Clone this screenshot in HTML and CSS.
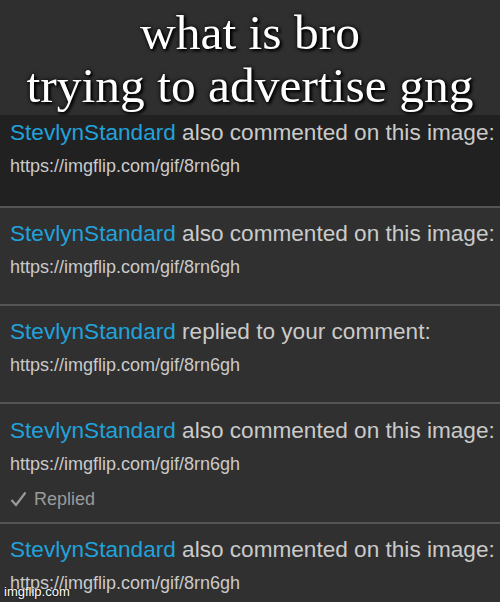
FILE: index.html
```html
<!DOCTYPE html>
<html lang="en">
<head>
    <meta charset="UTF-8">
    <meta name="viewport" content="width=device-width, initial-scale=1.0">
    <title>what is bro trying to advertise gng</title>
    <link rel="stylesheet" href="styles.css">
</head>
<body>

    <div class="meme">
        <header class="caption">
            <p>what is bro<br>trying to advertise gng</p>
        </header>

        <ul class="notifications">
            <li class="notification notification-first">
                <div class="notification-title"><a class="user">StevlynStandard</a> also commented on this image:</div>
                <div class="notification-link">https://imgflip.com/gif/8rn6gh</div>
            </li>
            <li class="notification">
                <div class="notification-title"><a class="user">StevlynStandard</a> also commented on this image:</div>
                <div class="notification-link">https://imgflip.com/gif/8rn6gh</div>
            </li>
            <li class="notification">
                <div class="notification-title"><a class="user">StevlynStandard</a> replied to your comment:</div>
                <div class="notification-link">https://imgflip.com/gif/8rn6gh</div>
            </li>
            <li class="notification notification-replied">
                <div class="notification-title"><a class="user">StevlynStandard</a> also commented on this image:</div>
                <div class="notification-link">https://imgflip.com/gif/8rn6gh</div>
                <div class="replied">
                    <svg class="check" width="17" height="16" viewBox="0 0 17 16">
                        <path d="M1.5 9 L6 14 L15.5 1.5" fill="none" stroke="#9a9a9a" stroke-width="2.2"/>
                    </svg>
                    Replied
                </div>
            </li>
            <li class="notification">
                <div class="notification-title"><a class="user">StevlynStandard</a> also commented on this image:</div>
                <div class="notification-link">https://imgflip.com/gif/8rn6gh</div>
            </li>
        </ul>

        <span class="watermark">imgflip.com</span>
    </div>

</body>
</html>
```

FILE: styles.css
```css
:root {
    --header-bg: #2f2f2f;
    --row-bg: #303030;
    --row-dark: #212121;
    --divider: #555555;
    --blue: #21a2da;
    --text: #cacaca;
    --muted: #9a9a9a;
    --white: #ffffff;
}

body {
    margin: 0;
    background-color: var(--row-bg);
    font-family: "Liberation Sans", Arial, sans-serif;
}

.meme {
    position: relative;
    width: 500px;
    height: 602px;
    overflow: hidden;
}

.caption {
    background-color: var(--header-bg);
    height: 115px;
    padding-top: 6px;
    box-sizing: border-box;
    text-align: center;
}

.caption p {
    margin: 0;
    font-family: "Liberation Serif", "Times New Roman", serif;
    font-size: 49.5px;
    line-height: 53px;
    color: var(--white);
    text-shadow: 0 0 4px #000, 2px 2px 3px #000;
}

.notifications {
    list-style: none;
    margin: 0;
    padding: 0;
}

.notification {
    display: flex;
    flex-direction: column;
    gap: 9px;
    padding: 13px 10px 26px;
    background-color: var(--row-bg);
    border-bottom: 2px solid var(--divider);
}

.notification-first {
    background-color: var(--row-dark);
    padding-top: 5px;
    padding-bottom: 29px;
}

.notification-replied {
    padding-top: 14px;
    padding-bottom: 12px;
}

.notification-title {
    font-size: 22.6px;
    line-height: 26px;
    color: var(--text);
    white-space: nowrap;
}

.user {
    color: var(--blue);
}

.notification-link {
    font-size: 18px;
    line-height: 22px;
    color: var(--text);
}

.replied {
    display: flex;
    align-items: center;
    gap: 7px;
    margin-top: 4px;
    font-size: 18px;
    line-height: 22px;
    color: var(--muted);
}

.check {
    display: block;
}

.watermark {
    position: absolute;
    left: 4px;
    bottom: 3px;
    font-size: 13px;
    color: var(--white);
    text-shadow: 0 0 2px #000;
}
```
